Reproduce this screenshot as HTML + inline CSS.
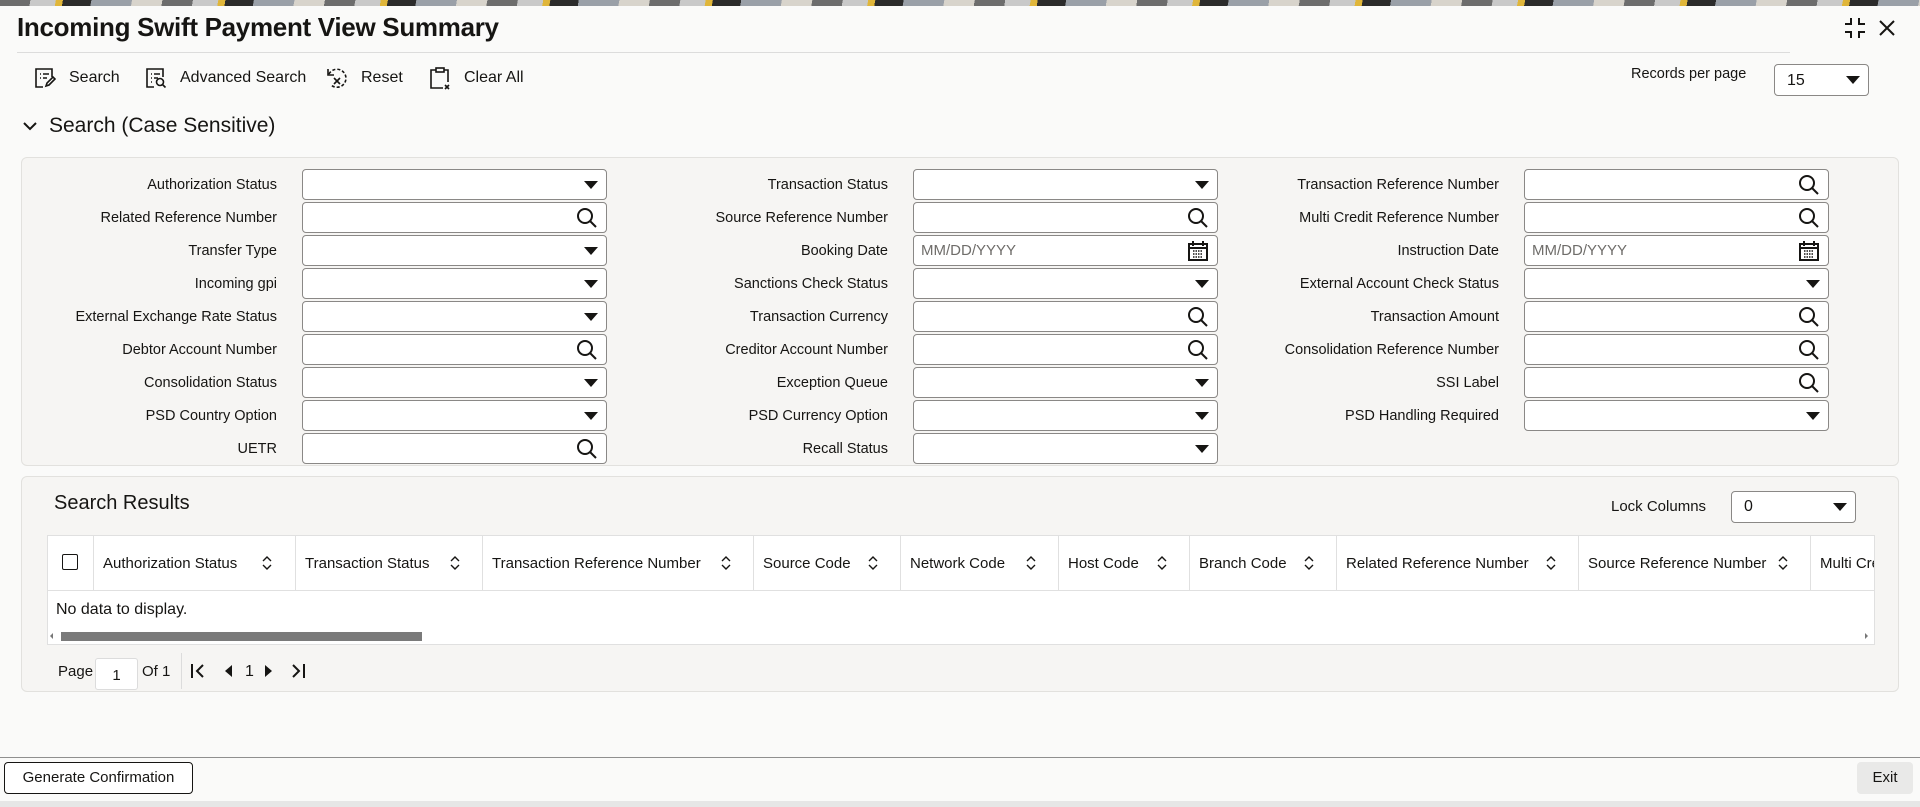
<!DOCTYPE html>
<html><head><meta charset="utf-8">
<style>
*{box-sizing:border-box;margin:0;padding:0}
body{width:1920px;height:807px;overflow:hidden;background:#fafaf9;font-family:"Liberation Sans",sans-serif;color:#161513;position:relative}
.abs{position:absolute}
.banner{left:0;top:0;width:1920px;height:6px;background:repeating-linear-gradient(100deg,#6d6d6d 0 30px,#c9c9c9 30px 55px,#e0b63a 55px 62px,#2b2b2b 62px 90px,#9aa0a8 90px 130px,#d8d4cc 130px 160px)}
.title{left:17px;top:12px;font-size:26px;font-weight:bold;letter-spacing:-0.3px}
.sep{left:17px;top:52px;width:1773px;height:1px;background:#dcdcdc}
.tb{top:69px;font-size:16px}
.panel{background:#f6f5f3;border:1px solid #e2e1de;border-radius:6px}
.lbl{left:0;font-size:14.5px;text-align:right;height:31px;line-height:33px;white-space:nowrap}
.inp{height:31px;background:#fff;border:1px solid #8a8886;border-radius:4px}
.inp svg{position:absolute;right:8px;top:50%;transform:translateY(-50%)}
.ph{position:absolute;left:7px;top:6px;font-size:15px;color:#6f6d6a}
.th{top:535px;height:55px;line-height:57px;font-size:15px;white-space:nowrap;border-left:1px solid #e0e0e0;padding-left:9px;overflow:hidden}
.sort{position:absolute;top:0}
</style></head><body>
<div class="abs banner"></div>
<div class="abs title">Incoming Swift Payment View Summary</div>
<svg class="abs" style="left:1843px;top:16px" width="24" height="24" viewBox="0 0 24 24" fill="none" stroke="#161513" stroke-width="2"><path d="M8 2v6H2M16 2v6h6M8 22v-6H2M16 22v-6h6"/></svg>
<svg class="abs" style="left:1878px;top:19px" width="18" height="18" viewBox="0 0 18 18" stroke="#161513" stroke-width="2"><path d="M2 2L16 16M16 2L2 16"/></svg>
<div class="abs sep"></div>

<svg class="abs" style="left:34px;top:67px" width="22" height="22" viewBox="0 0 22 22" fill="none" stroke="#161513" stroke-width="1.6"><path d="M9 20H2V2h16v8"/><path d="M6 7h1M9 7h6M6 11h1M9 11h4"/><path d="M12 19l1-3 6-6 2 2-6 6z"/></svg>
<div class="abs tb" style="left:69px">Search</div>
<svg class="abs" style="left:145px;top:67px" width="22" height="22" viewBox="0 0 22 22" fill="none" stroke="#161513" stroke-width="1.6"><path d="M9 20H2V2h16v8"/><path d="M6 7h1M9 7h6M6 11h1M9 11h4M6 15h1"/><circle cx="15" cy="15" r="3.5"/><path d="M17.5 17.5l3 3"/></svg>
<div class="abs tb" style="left:180px">Advanced Search</div>
<svg class="abs" style="left:325px;top:66px" width="24" height="24" viewBox="0 0 24 24" fill="none" stroke="#161513" stroke-width="1.6"><path d="M4 8a9 9 0 1 1 2 11" stroke-dasharray="3 2"/><path d="M3 3v6h6"/><path d="M9 12l6 6M15 12l-6 6"/></svg>
<div class="abs tb" style="left:361px">Reset</div>
<svg class="abs" style="left:429px;top:66px" width="22" height="24" viewBox="0 0 22 24" fill="none" stroke="#161513" stroke-width="1.6"><path d="M7 4H2v18h12M15 4h4v12"/><rect x="7" y="2" width="8" height="4"/><path d="M16 19l4 4M20 19l-4 4"/></svg>
<div class="abs tb" style="left:464px">Clear All</div>

<div class="abs" style="left:1631px;top:66px;font-size:14.5px">Records per page</div>
<div class="abs inp" style="left:1774px;top:64px;width:95px;height:32px"><span class="ph" style="color:#161513;left:12px;top:7px;font-size:16px">15</span><svg width="14" height="8" viewBox="0 0 14 8"><path d="M0 0h14L7 8z" fill="#161513"/></svg></div>

<svg class="abs" style="left:23px;top:121px" width="14" height="10" viewBox="0 0 14 10" fill="none" stroke="#161513" stroke-width="2"><path d="M1 2l6 6 6-6"/></svg>
<div class="abs" style="left:49px;top:114px;font-size:21px">Search (Case Sensitive)</div>

<div class="abs panel" style="left:21px;top:157px;width:1878px;height:309px"></div>

<div class="abs lbl" style="top:169px;width:277px">Authorization Status</div>
<div class="abs lbl" style="top:202px;width:277px">Related Reference Number</div>
<div class="abs lbl" style="top:235px;width:277px">Transfer Type</div>
<div class="abs lbl" style="top:268px;width:277px">Incoming gpi</div>
<div class="abs lbl" style="top:301px;width:277px">External Exchange Rate Status</div>
<div class="abs lbl" style="top:334px;width:277px">Debtor Account Number</div>
<div class="abs lbl" style="top:367px;width:277px">Consolidation Status</div>
<div class="abs lbl" style="top:400px;width:277px">PSD Country Option</div>
<div class="abs lbl" style="top:433px;width:277px">UETR</div>
<div class="abs lbl" style="top:169px;width:888px">Transaction Status</div>
<div class="abs lbl" style="top:202px;width:888px">Source Reference Number</div>
<div class="abs lbl" style="top:235px;width:888px">Booking Date</div>
<div class="abs lbl" style="top:268px;width:888px">Sanctions Check Status</div>
<div class="abs lbl" style="top:301px;width:888px">Transaction Currency</div>
<div class="abs lbl" style="top:334px;width:888px">Creditor Account Number</div>
<div class="abs lbl" style="top:367px;width:888px">Exception Queue</div>
<div class="abs lbl" style="top:400px;width:888px">PSD Currency Option</div>
<div class="abs lbl" style="top:433px;width:888px">Recall Status</div>
<div class="abs lbl" style="top:169px;width:1499px">Transaction Reference Number</div>
<div class="abs lbl" style="top:202px;width:1499px">Multi Credit Reference Number</div>
<div class="abs lbl" style="top:235px;width:1499px">Instruction Date</div>
<div class="abs lbl" style="top:268px;width:1499px">External Account Check Status</div>
<div class="abs lbl" style="top:301px;width:1499px">Transaction Amount</div>
<div class="abs lbl" style="top:334px;width:1499px">Consolidation Reference Number</div>
<div class="abs lbl" style="top:367px;width:1499px">SSI Label</div>
<div class="abs lbl" style="top:400px;width:1499px">PSD Handling Required</div>

<div class="abs inp" style="left:302px;top:169px;width:305px"><svg width="14" height="8" viewBox="0 0 14 8"><path d="M0 0h14L7 8z" fill="#161513"/></svg></div>
<div class="abs inp" style="left:302px;top:202px;width:305px"><svg width="22" height="22" viewBox="0 0 22 22" fill="none" stroke="#161513" stroke-width="2"><circle cx="9" cy="9" r="7"/><path d="M14 14l6 6"/></svg></div>
<div class="abs inp" style="left:302px;top:235px;width:305px"><svg width="14" height="8" viewBox="0 0 14 8"><path d="M0 0h14L7 8z" fill="#161513"/></svg></div>
<div class="abs inp" style="left:302px;top:268px;width:305px"><svg width="14" height="8" viewBox="0 0 14 8"><path d="M0 0h14L7 8z" fill="#161513"/></svg></div>
<div class="abs inp" style="left:302px;top:301px;width:305px"><svg width="14" height="8" viewBox="0 0 14 8"><path d="M0 0h14L7 8z" fill="#161513"/></svg></div>
<div class="abs inp" style="left:302px;top:334px;width:305px"><svg width="22" height="22" viewBox="0 0 22 22" fill="none" stroke="#161513" stroke-width="2"><circle cx="9" cy="9" r="7"/><path d="M14 14l6 6"/></svg></div>
<div class="abs inp" style="left:302px;top:367px;width:305px"><svg width="14" height="8" viewBox="0 0 14 8"><path d="M0 0h14L7 8z" fill="#161513"/></svg></div>
<div class="abs inp" style="left:302px;top:400px;width:305px"><svg width="14" height="8" viewBox="0 0 14 8"><path d="M0 0h14L7 8z" fill="#161513"/></svg></div>
<div class="abs inp" style="left:302px;top:433px;width:305px"><svg width="22" height="22" viewBox="0 0 22 22" fill="none" stroke="#161513" stroke-width="2"><circle cx="9" cy="9" r="7"/><path d="M14 14l6 6"/></svg></div>
<div class="abs inp" style="left:913px;top:169px;width:305px"><svg width="14" height="8" viewBox="0 0 14 8"><path d="M0 0h14L7 8z" fill="#161513"/></svg></div>
<div class="abs inp" style="left:913px;top:202px;width:305px"><svg width="22" height="22" viewBox="0 0 22 22" fill="none" stroke="#161513" stroke-width="2"><circle cx="9" cy="9" r="7"/><path d="M14 14l6 6"/></svg></div>
<div class="abs inp" style="left:913px;top:235px;width:305px"><span class="ph">MM/DD/YYYY</span><svg width="22" height="22" viewBox="0 0 22 22" fill="none" stroke="#161513" stroke-width="2"><rect x="2" y="4" width="18" height="16"/><path d="M6 1v5M16 1v5M2 8h18"/><path d="M6 11h10M6 14h10M6 17h10" stroke-width="1.5" stroke-dasharray="1.5 1"/></svg></div>
<div class="abs inp" style="left:913px;top:268px;width:305px"><svg width="14" height="8" viewBox="0 0 14 8"><path d="M0 0h14L7 8z" fill="#161513"/></svg></div>
<div class="abs inp" style="left:913px;top:301px;width:305px"><svg width="22" height="22" viewBox="0 0 22 22" fill="none" stroke="#161513" stroke-width="2"><circle cx="9" cy="9" r="7"/><path d="M14 14l6 6"/></svg></div>
<div class="abs inp" style="left:913px;top:334px;width:305px"><svg width="22" height="22" viewBox="0 0 22 22" fill="none" stroke="#161513" stroke-width="2"><circle cx="9" cy="9" r="7"/><path d="M14 14l6 6"/></svg></div>
<div class="abs inp" style="left:913px;top:367px;width:305px"><svg width="14" height="8" viewBox="0 0 14 8"><path d="M0 0h14L7 8z" fill="#161513"/></svg></div>
<div class="abs inp" style="left:913px;top:400px;width:305px"><svg width="14" height="8" viewBox="0 0 14 8"><path d="M0 0h14L7 8z" fill="#161513"/></svg></div>
<div class="abs inp" style="left:913px;top:433px;width:305px"><svg width="14" height="8" viewBox="0 0 14 8"><path d="M0 0h14L7 8z" fill="#161513"/></svg></div>
<div class="abs inp" style="left:1524px;top:169px;width:305px"><svg width="22" height="22" viewBox="0 0 22 22" fill="none" stroke="#161513" stroke-width="2"><circle cx="9" cy="9" r="7"/><path d="M14 14l6 6"/></svg></div>
<div class="abs inp" style="left:1524px;top:202px;width:305px"><svg width="22" height="22" viewBox="0 0 22 22" fill="none" stroke="#161513" stroke-width="2"><circle cx="9" cy="9" r="7"/><path d="M14 14l6 6"/></svg></div>
<div class="abs inp" style="left:1524px;top:235px;width:305px"><span class="ph">MM/DD/YYYY</span><svg width="22" height="22" viewBox="0 0 22 22" fill="none" stroke="#161513" stroke-width="2"><rect x="2" y="4" width="18" height="16"/><path d="M6 1v5M16 1v5M2 8h18"/><path d="M6 11h10M6 14h10M6 17h10" stroke-width="1.5" stroke-dasharray="1.5 1"/></svg></div>
<div class="abs inp" style="left:1524px;top:268px;width:305px"><svg width="14" height="8" viewBox="0 0 14 8"><path d="M0 0h14L7 8z" fill="#161513"/></svg></div>
<div class="abs inp" style="left:1524px;top:301px;width:305px"><svg width="22" height="22" viewBox="0 0 22 22" fill="none" stroke="#161513" stroke-width="2"><circle cx="9" cy="9" r="7"/><path d="M14 14l6 6"/></svg></div>
<div class="abs inp" style="left:1524px;top:334px;width:305px"><svg width="22" height="22" viewBox="0 0 22 22" fill="none" stroke="#161513" stroke-width="2"><circle cx="9" cy="9" r="7"/><path d="M14 14l6 6"/></svg></div>
<div class="abs inp" style="left:1524px;top:367px;width:305px"><svg width="22" height="22" viewBox="0 0 22 22" fill="none" stroke="#161513" stroke-width="2"><circle cx="9" cy="9" r="7"/><path d="M14 14l6 6"/></svg></div>
<div class="abs inp" style="left:1524px;top:400px;width:305px"><svg width="14" height="8" viewBox="0 0 14 8"><path d="M0 0h14L7 8z" fill="#161513"/></svg></div>

<div class="abs panel" style="left:21px;top:476px;width:1878px;height:216px"></div>
<div class="abs" style="left:54px;top:492px;font-size:20px">Search Results</div>
<div class="abs" style="left:1611px;top:498px;font-size:15px">Lock Columns</div>
<div class="abs inp" style="left:1731px;top:491px;width:125px;height:32px"><span class="ph" style="color:#161513;left:12px;top:6px;font-size:16px">0</span><svg width="14" height="8" viewBox="0 0 14 8"><path d="M0 0h14L7 8z" fill="#161513"/></svg></div>

<div class="abs" style="left:47px;top:535px;width:1828px;height:110px;background:#fff;border:1px solid #e0e0e0;overflow:hidden"></div>
<div class="abs" style="left:47px;top:590px;width:1828px;height:1px;background:#e0e0e0"></div>
<div class="abs" style="left:62px;top:554px;width:16px;height:16px;border:1.5px solid #161513;border-radius:2px"></div>
<div class="abs th" style="left:93px;width:202px">Authorization Status<svg class="sort" style="left:168px;top:21px" width="10" height="14" viewBox="0 0 10 14" fill="none" stroke="#161513" stroke-width="1.4"><path d="M1 5l4-4 4 4M1 9l4 4 4-4"/></svg></div>
<div class="abs th" style="left:295px;width:187px">Transaction Status<svg class="sort" style="left:154px;top:21px" width="10" height="14" viewBox="0 0 10 14" fill="none" stroke="#161513" stroke-width="1.4"><path d="M1 5l4-4 4 4M1 9l4 4 4-4"/></svg></div>
<div class="abs th" style="left:482px;width:271px">Transaction Reference Number<svg class="sort" style="left:238px;top:21px" width="10" height="14" viewBox="0 0 10 14" fill="none" stroke="#161513" stroke-width="1.4"><path d="M1 5l4-4 4 4M1 9l4 4 4-4"/></svg></div>
<div class="abs th" style="left:753px;width:147px">Source Code<svg class="sort" style="left:114px;top:21px" width="10" height="14" viewBox="0 0 10 14" fill="none" stroke="#161513" stroke-width="1.4"><path d="M1 5l4-4 4 4M1 9l4 4 4-4"/></svg></div>
<div class="abs th" style="left:900px;width:158px">Network Code<svg class="sort" style="left:125px;top:21px" width="10" height="14" viewBox="0 0 10 14" fill="none" stroke="#161513" stroke-width="1.4"><path d="M1 5l4-4 4 4M1 9l4 4 4-4"/></svg></div>
<div class="abs th" style="left:1058px;width:131px">Host Code<svg class="sort" style="left:98px;top:21px" width="10" height="14" viewBox="0 0 10 14" fill="none" stroke="#161513" stroke-width="1.4"><path d="M1 5l4-4 4 4M1 9l4 4 4-4"/></svg></div>
<div class="abs th" style="left:1189px;width:147px">Branch Code<svg class="sort" style="left:114px;top:21px" width="10" height="14" viewBox="0 0 10 14" fill="none" stroke="#161513" stroke-width="1.4"><path d="M1 5l4-4 4 4M1 9l4 4 4-4"/></svg></div>
<div class="abs th" style="left:1336px;width:242px">Related Reference Number<svg class="sort" style="left:209px;top:21px" width="10" height="14" viewBox="0 0 10 14" fill="none" stroke="#161513" stroke-width="1.4"><path d="M1 5l4-4 4 4M1 9l4 4 4-4"/></svg></div>
<div class="abs th" style="left:1578px;width:232px">Source Reference Number<svg class="sort" style="left:199px;top:21px" width="10" height="14" viewBox="0 0 10 14" fill="none" stroke="#161513" stroke-width="1.4"><path d="M1 5l4-4 4 4M1 9l4 4 4-4"/></svg></div>
<div class="abs th" style="left:1810px;width:64px">Multi Credit</div>
<div class="abs" style="left:56px;top:601px;font-size:16px">No data to display.</div>
<div class="abs" style="left:50px;top:633px;width:0;height:0;border-top:3px solid transparent;border-bottom:3px solid transparent;border-right:3px solid #777"></div>
<div class="abs" style="left:61px;top:632px;width:361px;height:9px;background:#7a7a7a"></div>
<div class="abs" style="left:1865px;top:633px;width:0;height:0;border-top:3px solid transparent;border-bottom:3px solid transparent;border-left:3px solid #777"></div>

<div class="abs" style="left:58px;top:663px;font-size:15px">Page</div>
<div class="abs" style="left:95px;top:658px;width:43px;height:32px;background:#fff;border:1px solid #dcdcdc;border-radius:3px;text-align:center;line-height:34px;font-size:15px">1</div>
<div class="abs" style="left:142px;top:663px;font-size:15px">Of 1</div>
<div class="abs" style="left:181px;top:653px;width:1px;height:36px;background:#dcdcdc"></div>
<svg class="abs" style="left:190px;top:663px" width="16" height="16" viewBox="0 0 16 16" fill="none" stroke="#161513" stroke-width="2"><path d="M2 1v14M13 2L7 8l6 6"/></svg>
<svg class="abs" style="left:225px;top:665px" width="8" height="12" viewBox="0 0 8 12"><path d="M7 0v12L0 6z" fill="#161513"/></svg>
<div class="abs" style="left:245px;top:663px;font-size:16px">1</div>
<svg class="abs" style="left:264px;top:665px" width="8" height="12" viewBox="0 0 8 12"><path d="M1 0v12l7-6z" fill="#161513"/></svg>
<svg class="abs" style="left:290px;top:663px" width="16" height="16" viewBox="0 0 16 16" fill="none" stroke="#161513" stroke-width="2"><path d="M14 1v14M3 2l6 6-6 6"/></svg>

<div class="abs" style="left:0;top:757px;width:1920px;height:1px;background:#8f8f8f"></div>
<div class="abs" style="left:4px;top:762px;width:189px;height:32px;border:1px solid #161513;border-radius:4px;background:#fff;text-align:center;line-height:30px;font-size:15px">Generate Confirmation</div>
<div class="abs" style="left:1857px;top:762px;width:56px;height:32px;background:#e9e9e8;border-radius:4px;text-align:center;line-height:32px;font-size:15px">Exit</div>
<div class="abs" style="left:0;top:801px;width:1920px;height:6px;background:#e6e6e6"></div>
</body></html>
